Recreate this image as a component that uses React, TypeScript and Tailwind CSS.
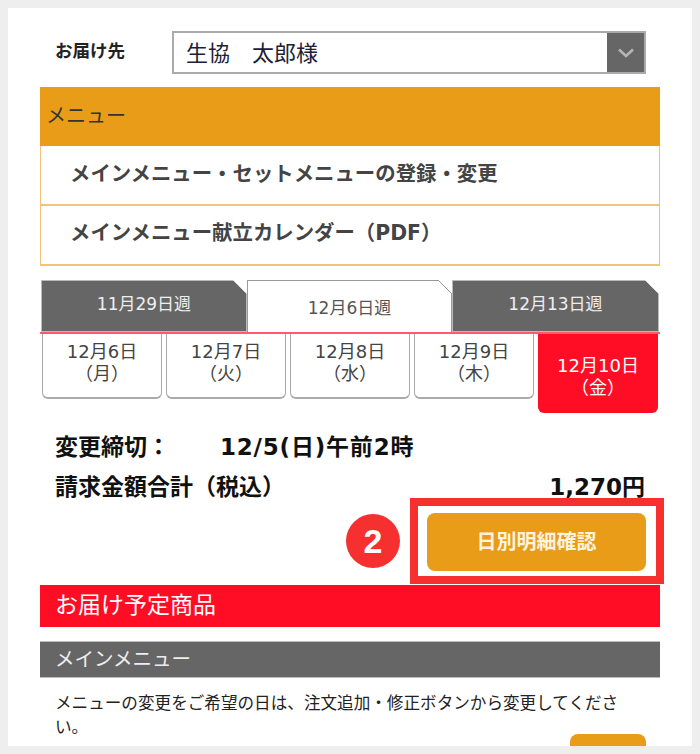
const FONT = "font-['Liberation_Sans','Noto_Sans_CJK_JP',sans-serif]"
const WIDE = "font-['DejaVu_Sans','Noto_Sans_CJK_JP',sans-serif]"

const DAYS = [
  { date: '12月6日', day: '（月）' },
  { date: '12月7日', day: '（火）' },
  { date: '12月8日', day: '（水）' },
  { date: '12月9日', day: '（木）' },
]

function Corner({ active }: { active?: boolean }) {
  return (
    <svg width="14" height="14" viewBox="0 0 14 14" className="absolute -right-px -top-px">
      <polygon points="0,0 14,0 14,14" fill="#fff" />
      <line x1="0" y1="0" x2="14" y2="14" stroke={active ? '#999' : '#ddd'} strokeWidth="1" />
    </svg>
  )
}

export default function App() {
  return (
    <div className={`h-[754px] w-[700px] overflow-hidden bg-[#eeeeee] p-2 ${FONT}`}>
      <div className="relative h-full overflow-hidden bg-white px-8 pt-[23px]">
        {/* お届け先 */}
        <div className="flex h-[43px] items-start">
          <span className="ml-[15px] mt-[10px] w-[117px] text-[17.5px] leading-5 font-bold text-[#222]">お届け先</span>
          <div className="flex h-[43px] w-[474px] items-stretch border-2 border-[#aaaaaa] bg-white">
            <span className="flex-1 pl-3 text-[22px] leading-[42px] text-[#221c35]">生協　太郎様</span>
            <span className="flex w-[37px] items-center justify-center bg-[#666666]">
              <svg width="18" height="12" viewBox="0 0 18 12" fill="none">
                <path d="M2 2.5 9 9l7-6.5" stroke="#b5b5b5" strokeWidth="2.6" />
              </svg>
            </span>
          </div>
        </div>

        {/* メニュー */}
        <div className="mt-[13px] w-[620px]">
          <div className="h-[59px] bg-[#e99c17] pl-[6px] text-[20px] leading-[58px] text-[#333]">メニュー</div>
          <div className={`h-[60px] border-x border-b-2 border-[#f5c27a] pl-[29px] text-[20.4px] leading-[56px] font-bold text-[#444] ${WIDE}`}>
            メインメニュー・セットメニューの登録・変更
          </div>
          <div className={`h-[60px] border-x border-b-2 border-[#f5c27a] pl-[29px] text-[20.4px] leading-[54px] font-bold text-[#444] ${WIDE}`}>
            メインメニュー献立カレンダー（PDF）
          </div>
        </div>

        {/* 週タブ */}
        <div className={`mt-[14px] flex h-[54px] w-[620px] border-b-2 border-[#ff5a6e] text-[17px] ${WIDE}`}>
          <div className="relative ml-px flex w-[206px] items-center justify-center border border-[#bbb] bg-[#666666] pb-0.5 text-[#eee]">
            11月29日週
            <Corner />
          </div>
          <div className="relative flex w-[205px] items-center justify-center border border-b-0 border-[#999] bg-white pt-1 text-[#555]">
            12月6日週
            <Corner active />
          </div>
          <div className="relative flex w-[207px] items-center justify-center border border-[#bbb] bg-[#666666] pb-0.5 text-[#eee]">
            12月13日週
            <Corner />
          </div>
        </div>

        {/* 日付 */}
        <div className={`flex w-[620px] items-start gap-1 px-0.5 text-[18px] leading-[22px] ${WIDE}`}>
          {DAYS.map((d) => (
            <div key={d.date} className="h-[65px] w-[120px] rounded-b-md border-x border-b-2 border-[#aaaaaa] pt-[7px] text-center text-[#444]">
              <div>{d.date}</div>
              <div>{d.day}</div>
            </div>
          ))}
          <div className="h-[79px] w-[120px] rounded-b-md bg-[#ff0d25] pt-[21px] text-center text-white">
            <div>12月10日</div>
            <div>（金）</div>
          </div>
        </div>

        {/* 締切・金額 */}
        <div className={`mt-[19px] flex h-[30px] items-center pl-[15px] text-[23px] font-bold text-[#111] ${WIDE}`}>
          <span className="w-[165px]">変更締切：</span>
          <span className="tracking-[0.8px]">12/5(日)午前2時</span>
        </div>
        <div className={`mt-[10px] flex h-[30px] w-[620px] items-center justify-between pl-[15px] text-[23px] font-bold text-[#111] ${WIDE}`}>
          <span>請求金額合計（税込）</span>
          <span className="mr-[15px]">1,270円</span>
        </div>

        {/* 日別明細確認 */}
        <div className="mt-[11px] flex w-[620px] justify-end pr-[14px]">
          <button className="h-[58px] w-[219px] rounded-lg bg-[#e99c17] text-[20px] font-bold text-[#fdf3df]">日別明細確認</button>
        </div>

        {/* お届け予定商品 */}
        <div className="mt-[14px] h-[42px] w-[620px] bg-[#ff0d25] pl-[15px] text-[23px] leading-10 text-[#fff]">お届け予定商品</div>
        <div className="mt-[14px] h-[37px] w-[620px] border-y border-[#bbb] bg-[#666666] pl-[15px] text-[19.5px] leading-[35px] text-[#eee]">メインメニュー</div>
        <p className="mt-[14px] w-[620px] pl-[15px] pr-[20px] text-[16.6px] leading-6 text-[#222]">
          メニューの変更をご希望の日は、注文追加・修正ボタンから変更してください。
        </p>
        <div className="ml-[530px] mt-[-6px] h-[40px] w-[76px] rounded-t-lg bg-[#e99c17]" />

        {/* 注釈 */}
        <div className="absolute left-[402px] top-[490px] h-[86px] w-[254px] border-[8px] border-[#f5302e]" />
        <div className={`absolute left-[338px] top-[506px] flex h-[54px] w-[54px] items-center justify-center rounded-full bg-[#f5302e] text-[34px] font-bold text-white ${FONT}`}>2</div>
      </div>
    </div>
  )
}
